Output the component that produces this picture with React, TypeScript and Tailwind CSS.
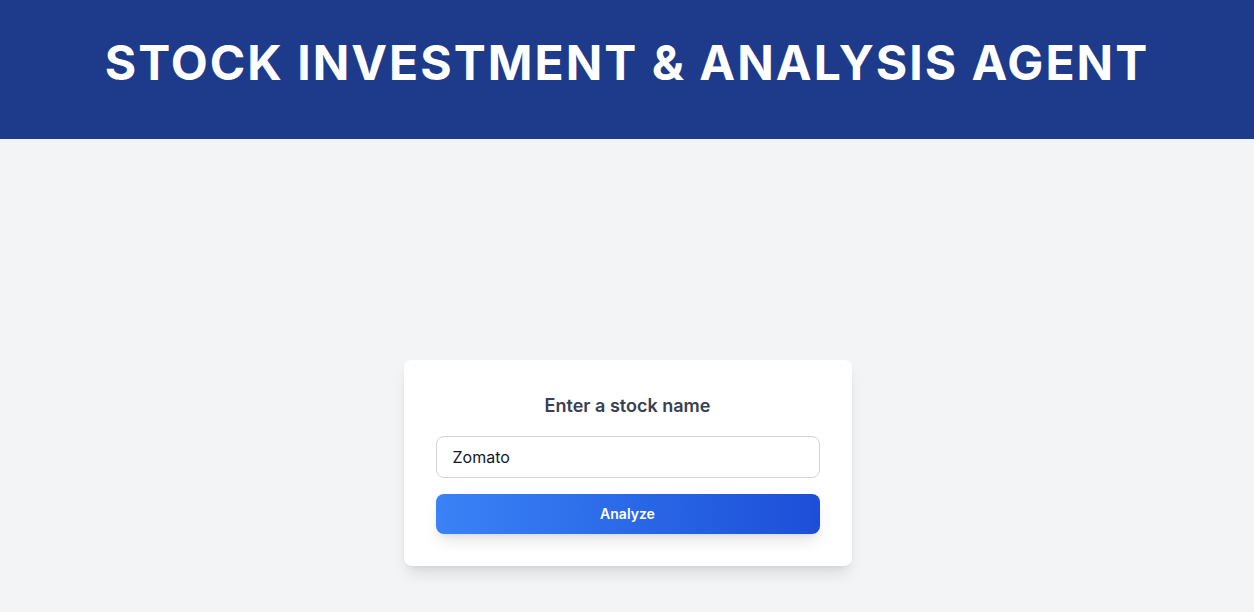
export default function App() {
  return (
    <div className="min-h-screen bg-[#f3f4f6]" style={{ fontFamily: "Inter, 'Noto Sans', sans-serif" }}>
      <header className="bg-[#1e3a8a] h-[139px] pt-[39px] text-center">
        <h1 className="text-5xl leading-[48px] font-bold tracking-[0.042em] text-white">
          STOCK INVESTMENT &amp; ANALYSIS AGENT
        </h1>
      </header>

      <main className="flex justify-center pt-[221px] pl-px">
        <div className="w-[448px] bg-white rounded-lg shadow-lg p-8">
          <h2 className="text-center text-lg font-semibold text-[#374151] mb-4 leading-7">Enter a stock name</h2>
          <input
            type="text"
            defaultValue="Zomato"
            className="w-full h-[42px] px-4 border border-[#d1d5db] rounded-lg text-base text-[#111827] outline-none"
          />
          <button className="mt-4 w-full h-10 rounded-lg bg-gradient-to-r from-[#3b82f6] to-[#1d4ed8] text-white text-sm font-semibold shadow-lg">
            Analyze
          </button>
        </div>
      </main>
    </div>
  );
}
